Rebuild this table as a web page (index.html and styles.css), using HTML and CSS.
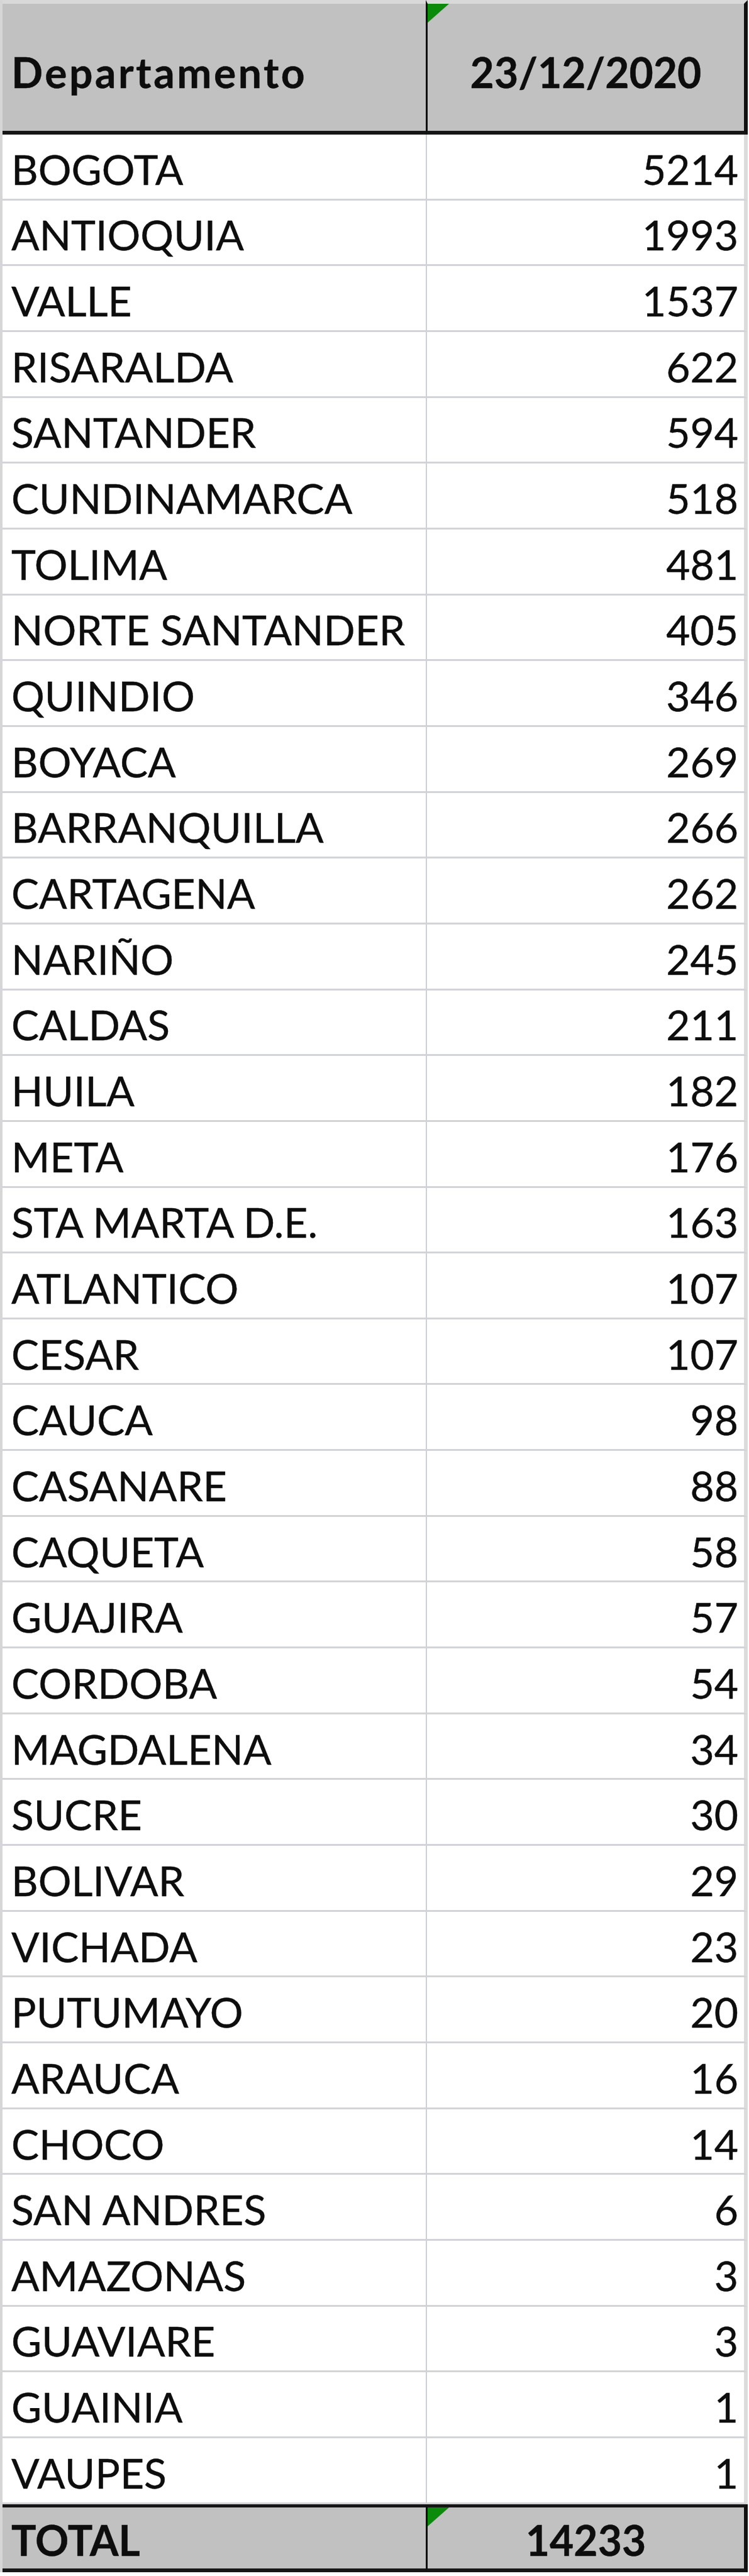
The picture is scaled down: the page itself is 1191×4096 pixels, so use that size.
FILE: index.html
```html
<!DOCTYPE html>
<html lang="es">
<head>
<meta charset="utf-8">
<title>Departamento 23/12/2020</title>
<link rel="stylesheet" href="styles.css">
</head>
<body>
<div class="sheet">
  <div class="row head">
    <div class="cell name">Departamento</div>
    <div class="cell mid"><span class="flag"></span>23/12/2020</div>
  </div>
  <div class="row"><div class="cell name">BOGOTA</div><div class="cell num">5214</div></div>
  <div class="row"><div class="cell name">ANTIOQUIA</div><div class="cell num">1993</div></div>
  <div class="row"><div class="cell name">VALLE</div><div class="cell num">1537</div></div>
  <div class="row"><div class="cell name">RISARALDA</div><div class="cell num">622</div></div>
  <div class="row"><div class="cell name">SANTANDER</div><div class="cell num">594</div></div>
  <div class="row"><div class="cell name">CUNDINAMARCA</div><div class="cell num">518</div></div>
  <div class="row"><div class="cell name">TOLIMA</div><div class="cell num">481</div></div>
  <div class="row"><div class="cell name">NORTE SANTANDER</div><div class="cell num">405</div></div>
  <div class="row"><div class="cell name">QUINDIO</div><div class="cell num">346</div></div>
  <div class="row"><div class="cell name">BOYACA</div><div class="cell num">269</div></div>
  <div class="row"><div class="cell name">BARRANQUILLA</div><div class="cell num">266</div></div>
  <div class="row"><div class="cell name">CARTAGENA</div><div class="cell num">262</div></div>
  <div class="row"><div class="cell name">NARIÑO</div><div class="cell num">245</div></div>
  <div class="row"><div class="cell name">CALDAS</div><div class="cell num">211</div></div>
  <div class="row"><div class="cell name">HUILA</div><div class="cell num">182</div></div>
  <div class="row"><div class="cell name">META</div><div class="cell num">176</div></div>
  <div class="row"><div class="cell name">STA MARTA D.E.</div><div class="cell num">163</div></div>
  <div class="row"><div class="cell name">ATLANTICO</div><div class="cell num">107</div></div>
  <div class="row"><div class="cell name">CESAR</div><div class="cell num">107</div></div>
  <div class="row"><div class="cell name">CAUCA</div><div class="cell num">98</div></div>
  <div class="row"><div class="cell name">CASANARE</div><div class="cell num">88</div></div>
  <div class="row"><div class="cell name">CAQUETA</div><div class="cell num">58</div></div>
  <div class="row"><div class="cell name">GUAJIRA</div><div class="cell num">57</div></div>
  <div class="row"><div class="cell name">CORDOBA</div><div class="cell num">54</div></div>
  <div class="row"><div class="cell name">MAGDALENA</div><div class="cell num">34</div></div>
  <div class="row"><div class="cell name">SUCRE</div><div class="cell num">30</div></div>
  <div class="row"><div class="cell name">BOLIVAR</div><div class="cell num">29</div></div>
  <div class="row"><div class="cell name">VICHADA</div><div class="cell num">23</div></div>
  <div class="row"><div class="cell name">PUTUMAYO</div><div class="cell num">20</div></div>
  <div class="row"><div class="cell name">ARAUCA</div><div class="cell num">16</div></div>
  <div class="row"><div class="cell name">CHOCO</div><div class="cell num">14</div></div>
  <div class="row"><div class="cell name">SAN ANDRES</div><div class="cell num">6</div></div>
  <div class="row"><div class="cell name">AMAZONAS</div><div class="cell num">3</div></div>
  <div class="row"><div class="cell name">GUAVIARE</div><div class="cell num">3</div></div>
  <div class="row"><div class="cell name">GUAINIA</div><div class="cell num">1</div></div>
  <div class="row"><div class="cell name">VAUPES</div><div class="cell num">1</div></div>
  <div class="row total">
    <div class="cell name">TOTAL</div>
    <div class="cell mid"><span class="flag"></span>14233</div>
  </div>
</div>
</body>
</html>
```

FILE: styles.css
```css
* {
  box-sizing: border-box;
}

body {
  margin: 0;
  background: #ffffff;
  font-family: Lato, "Open Sans", sans-serif;
  color: #0d0d0d;
}

.sheet {
  width: 1189px;
  border-left: 4px solid #d6d6d6;
}

.row {
  display: grid;
  grid-template-columns: 673px 512px;
  height: 104.67px;
}

.cell {
  position: relative;
  display: flex;
  align-items: center;
  font-size: 66px;
  line-height: 1;
  padding-top: 8px;
  border-bottom: 3px solid #d3d4d9;
  white-space: nowrap;
  -webkit-text-stroke: 0.4px #0d0d0d;
}

.name {
  padding-left: 14px;
}

.num {
  justify-content: flex-end;
  padding-right: 9px;
  border-left: 2px solid #ccd0da;
  border-right: 6px solid #dcdcdc;
}

.head {
  height: 214px;
}

.head .cell,
.total .cell {
  background: #c1c1c1;
  font-weight: 700;
  border-bottom: 6px solid #161616;
}

.head .cell {
  border-top: 6px solid #d9d9d9;
  padding-top: 16px;
}

.head .name {
  letter-spacing: 3.5px;
}

.mid {
  justify-content: center;
  border-left: 3px solid #111111;
  border-right: 6px solid #111111;
}

.total {
  height: 108px;
}

.total .cell {
  border-top: 5px solid #161616;
  padding-top: 8px;
}

.flag {
  position: absolute;
  left: 0;
  top: 0;
  width: 0;
  height: 0;
  border-top: 30px solid #0a8c0a;
  border-right: 34px solid transparent;
}
```
